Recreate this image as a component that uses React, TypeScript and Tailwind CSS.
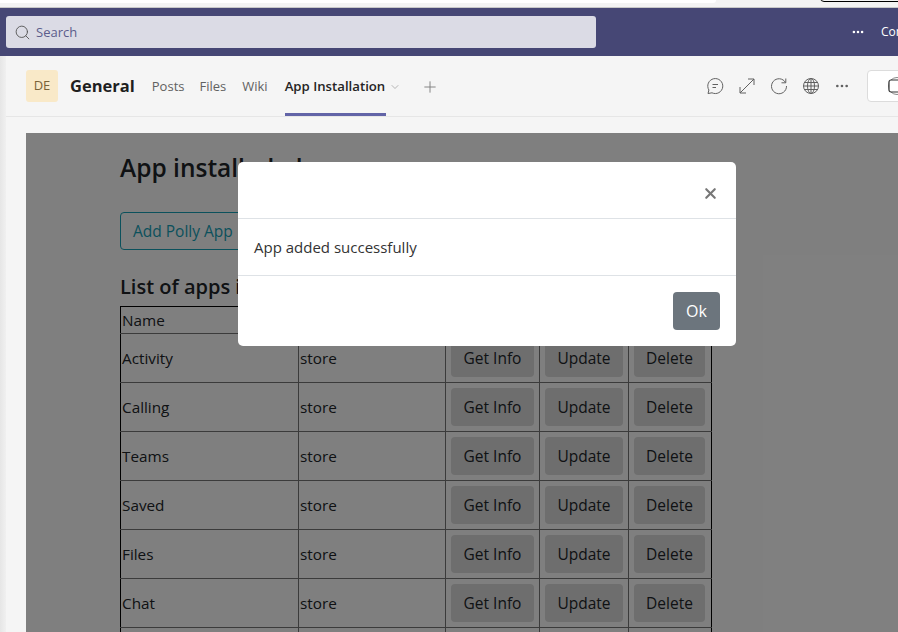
import { Plus, ChevronDown, Search, Ellipsis, X } from "lucide-react";

const apps = ["Activity", "Calling", "Teams", "Saved", "Files", "Chat", "Meet"];

const font = "font-['Open_Sans','Noto_Sans',sans-serif]";

const HeaderIcons = () => (
  <div className="flex items-center gap-[14px] text-[#616161]">
    <svg width="18" height="18" viewBox="0 0 18 18" fill="none" stroke="currentColor" strokeWidth="1">
      <path d="M2 16.5 L2.9 13 A7.5 7.5 0 1 1 6 15.8 Z" />
      <path d="M6.5 7.5H12M6.5 10.5H10" />
    </svg>
    <svg width="18" height="18" viewBox="0 0 18 18" fill="none" stroke="currentColor" strokeWidth="1">
      <path d="M2 16L16 2M10 2H16V8M2 10V16H8" />
    </svg>
    <svg width="18" height="18" viewBox="0 0 18 18" fill="none" stroke="currentColor" strokeWidth="1">
      <path d="M15.5 5.5 A7.5 7.5 0 1 0 16.5 9" />
      <path d="M15.8 1.5V5.8H11.5" />
    </svg>
    <svg width="18" height="18" viewBox="0 0 18 18" fill="none" stroke="currentColor" strokeWidth="1">
      <circle cx="9" cy="9" r="7.5" />
      <ellipse cx="9" cy="9" rx="3.5" ry="7.5" />
      <path d="M9 1.5V16.5M1.5 9H16.5M2.5 5.5H15.5M2.5 12.5H15.5" />
    </svg>
    <Ellipsis size={16} strokeWidth={2} className="text-[#616161]" />
  </div>
);

const RowButton = ({ label, className }: { label: string; className: string }) => (
  <button className={`h-[38px] rounded-[4px] bg-[#dcdcdc] pt-[2px] text-[15.5px] text-[#212529] ${className}`}>
    {label}
  </button>
);

const App = () => {
  return (
    <div className={`flex h-[632px] w-[898px] flex-col overflow-hidden bg-[#f5f5f5] ${font}`}>
      <div className="relative h-2 shrink-0 border-b border-[#c8c8c8] bg-[#f3f3f3]">
        <div className="h-[3px] w-[716px] rounded-br-[6px] bg-white" />
        <div className="absolute left-[820px] top-[-6px] h-2 w-[120px] rounded-[8px] border border-black" />
      </div>

      <div className="flex h-12 shrink-0 items-center justify-between bg-[#464775] pl-[6px]">
        <div className="flex h-8 w-[590px] items-center gap-[5px] rounded-[3px] bg-[#dbdbe5] pl-[8px] text-[13px] text-[#5b5d8c]">
          <Search size={17} strokeWidth={1.3} className="text-[#555555]" />
          <span className="pt-[1px]">Search</span>
        </div>
        <div className="flex w-[47px] shrink-0 items-center gap-[16px] overflow-hidden whitespace-nowrap text-[12px] text-white">
          <Ellipsis size={14} strokeWidth={2.4} className="shrink-0" />
          <span>Contoso</span>
        </div>
      </div>

      <div className="flex min-h-0 flex-1">
        <div className="w-[6px] shrink-0 bg-gradient-to-r from-[#e6e6e6] to-[#f0f0f0]" />
        <div className="flex min-w-0 flex-1 flex-col">
          <div className="flex h-[61px] shrink-0 items-center justify-between border-b border-[#e6e6e6] pl-5">
            <div className="flex h-full items-center">
              <div className="flex h-8 w-8 items-center justify-center rounded-[3px] bg-[#f9e9c8] text-[13px] text-[#7a6238]">
                DE
              </div>
              <div className="ml-3 text-[16.5px] font-bold text-[#1f1f1f]">General</div>
              <div className="ml-[17px] flex h-full items-center gap-[15px] pt-[2px] text-[13px] text-[#616161]">
                <span>Posts</span>
                <span>Files</span>
                <span className="ml-[1px]">Wiki</span>
                <div className="relative ml-[2px] flex h-full items-center">
                  <span className="text-[13.2px] font-semibold text-[#252424]">App Installation</span>
                  <div className="absolute bottom-0 left-0 h-[3px] w-[101px] bg-[#6264a7]" />
                </div>
              </div>
              <ChevronDown size={12} strokeWidth={1.2} className="ml-1 mt-[2px] text-[#8a8a8a]" />
              <Plus size={18} strokeWidth={1.2} className="ml-[20px] mt-[1px] text-[#7a7a7a]" />
            </div>
            <div className="-mr-[9px] flex items-center gap-[17px]">
              <HeaderIcons />
              <div className="flex h-8 w-[40px] shrink-0 items-center rounded-[4px] border border-[#dcdcdc] bg-white pl-[20px]">
                <svg width="20" height="20" viewBox="0 0 20 20" fill="none" className="shrink-0">
                  <circle cx="9" cy="10" r="8.5" stroke="#888" strokeWidth="1" />
                  <rect x="1" y="4" width="16" height="12" rx="2" fill="#fff" stroke="#333" strokeWidth="1.2" />
                </svg>
              </div>
            </div>
          </div>

          <div className="relative ml-5 mt-4 min-h-0 flex-1 overflow-hidden bg-white pl-[94px] text-[#212529]">
            <h1 className="mt-[17px] text-[24.5px] font-semibold leading-[36px]">App installed ok</h1>
            <button className="mt-[26px] h-[38px] w-[170px] rounded-[4px] border border-[#17a2b8] pl-3 pt-[1px] text-left text-[15.5px] text-[#17a2b8]">
              Add Polly App
            </button>
            <h2 className="mb-1 mt-[22px] text-[20px] font-semibold leading-[30px]">List of apps in the team</h2>
            <table className="w-[591px] table-fixed border-collapse text-[15.3px]">
              <colgroup>
                <col className="w-[178px]" />
                <col className="w-[147px]" />
                <col className="w-[94px]" />
                <col className="w-[89px]" />
                <col className="w-[83px]" />
              </colgroup>
              <tbody>
                <tr className="h-[27px]">
                  <td className="border border-[#777] border-l-black border-t-black pl-[1px]">Name</td>
                  <td className="border border-[#777] border-t-black pl-[1px]">Source</td>
                  <td className="border border-[#777] border-t-black border-r-black" colSpan={3} />
                </tr>
                {apps.map((name) => (
                  <tr key={name} className="h-[49px]">
                    <td className="border border-[#777] border-l-black pl-[1px]">{name}</td>
                    <td className="border border-[#777] pl-[1px]">store</td>
                    <td className="border border-[#777] pl-[5px]">
                      <RowButton label="Get Info" className="w-[83px]" />
                    </td>
                    <td className="border border-[#777] pl-[5px]">
                      <RowButton label="Update" className="w-[78px]" />
                    </td>
                    <td className="border border-[#777] border-r-black pl-[5px]">
                      <RowButton label="Delete" className="w-[71px]" />
                    </td>
                  </tr>
                ))}
              </tbody>
            </table>

            <div className="absolute inset-0 bg-black/50" />
            <div className="absolute left-[212px] top-[29px] w-[498px] rounded-[5px] bg-white text-[#333]">
              <div className="flex h-[57px] items-center justify-end border-b border-[#dee2e6] pr-[17px] pt-[6px]">
                <X size={17} strokeWidth={3} className="text-[#777777]" />
              </div>
              <div className="flex h-[57px] items-center border-b border-[#dee2e6] pl-4 text-[15px]">
                App added successfully
              </div>
              <div className="flex h-[70px] items-start justify-end pr-4 pt-4">
                <button className="h-[38px] w-[47px] rounded-[4px] bg-[#6c757d] text-[16px] text-white">Ok</button>
              </div>
            </div>
          </div>
        </div>
      </div>
    </div>
  );
};

export default App;
